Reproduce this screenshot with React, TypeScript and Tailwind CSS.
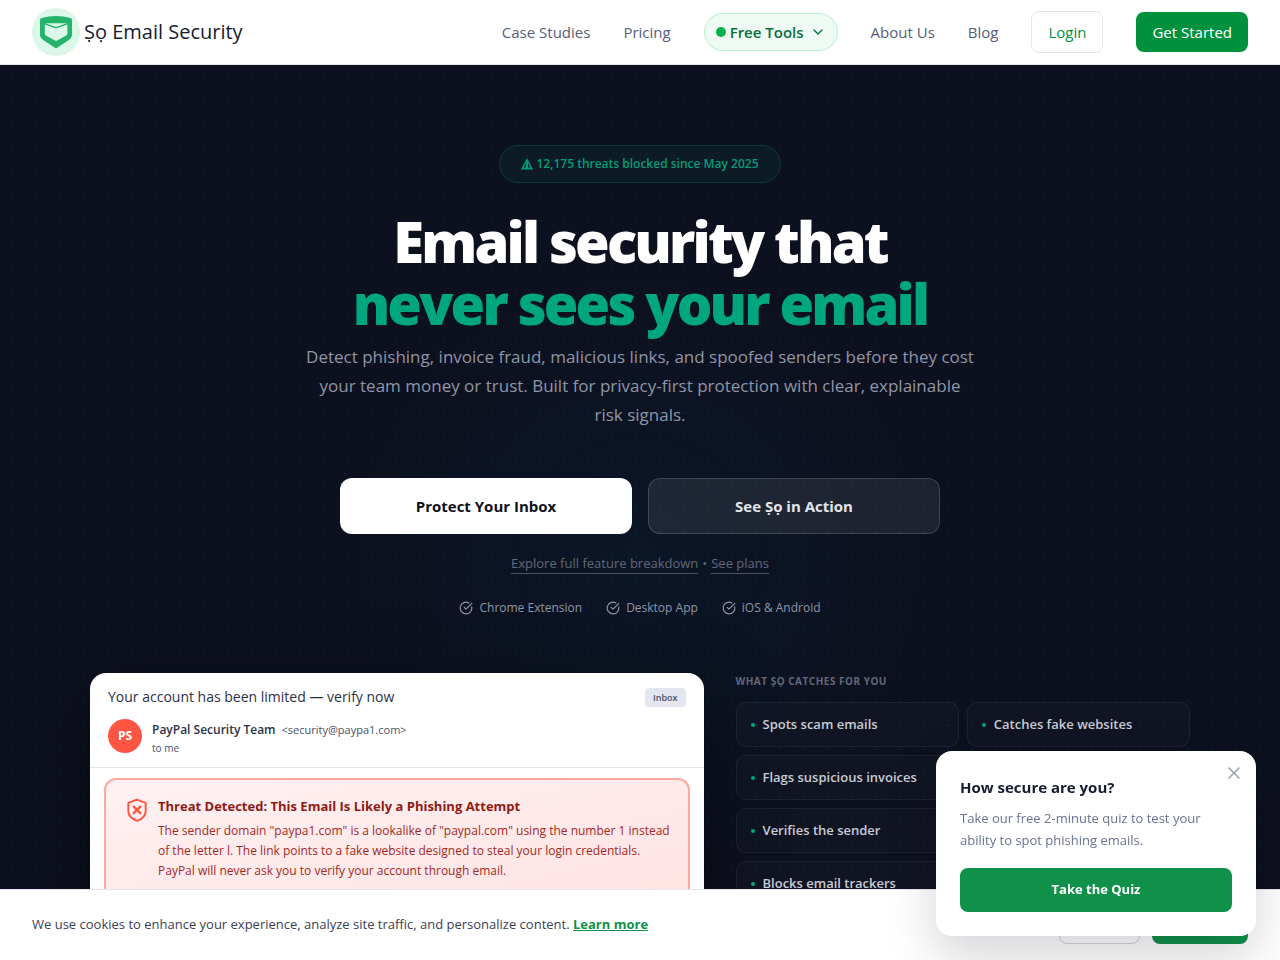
import type { ReactNode } from "react";
import { ChevronDown, CircleCheckBig, X } from "lucide-react";

const PLATFORMS = ["Chrome Extension", "Desktop App", "iOS & Android"];

const CATCH_COLUMNS = [
  ["Spots scam emails", "Flags suspicious invoices", "Verifies the sender", "Blocks email trackers"],
  ["Catches fake websites"],
];

function Logo() {
  return (
    <svg viewBox="0 0 48 48" className="h-12 w-12" aria-hidden="true">
      <circle cx="24" cy="24" r="24" fill="#dbf7e8" />
      <path
        d="M8 12.2c0-1.2.7-1.8 1.8-2.1C14.5 8.7 19 8 24 8s9.5.7 14.2 2.1c1.100.3 1.800.9 1.800 2.100V26c0 2.800-1 4.600-3.200 6l-11.300 7.500c-1 .7-2 .7-3 0L11.200 32C9 30.600 8 28.800 8 26Z"
        fill="#24b46c"
      />
      <path
        d="M12.800 16.400 24 20.600l11.400-4.200v9.200c0 .9-.3 1.400-1 1.800l-9.300 5.200c-.7.400-1.300.4-2 0l-9.300-5.200c-.6-.4-1-.9-1-1.800Z"
        fill="#dbf7e8"
      />
      <path d="M13.400 15.200h21.600L24 19Z" fill="#dbf7e8" />
    </svg>
  );
}

function WarningIcon() {
  return (
    <svg viewBox="0 0 12 12" className="h-3 w-3" aria-hidden="true">
      <path d="M6 .5 11.800 11.300H.2Z" fill="#069c78" stroke="#069c78" strokeLinejoin="round" strokeWidth=".4" />
      <path d="M5.100 4.600 2.700 9.500h2.200V5ZM6.900 4.600l2.400 4.900H7.100V5Z" fill="#0c1e28" />
    </svg>
  );
}

function ThreatIcon() {
  return (
    <svg
      viewBox="0 0 24 24"
      className="mt-0.5 h-[26px] w-[26px] flex-none"
      fill="none"
      stroke="#ff5542"
      strokeWidth="1.8"
      strokeLinecap="round"
      strokeLinejoin="round"
      aria-hidden="true"
    >
      <path d="M20 13c0 5-3.500 7.500-8 9-4.500-1.500-8-4-8-9V5.500l8-3 8 3Z" />
      <path d="m9 8.900 6 6M15 8.900l-6 6" strokeWidth="2.200" />
    </svg>
  );
}

function NavLink({ children }: { children: ReactNode }) {
  return (
    <a href="#" className="text-[15px] text-[#565d78]">
      {children}
    </a>
  );
}

function Header() {
  return (
    <header className="sticky top-0 z-10 flex h-[65px] items-center justify-between border-b border-gray-200 bg-white px-8">
      <a href="#" className="flex items-center gap-1">
        <Logo />
        <span className="text-[20px] font-medium text-[#151b30]">Ṣọ Email Security</span>
      </a>

      <nav className="flex items-center gap-[33px]">
        <NavLink>Case Studies</NavLink>
        <NavLink>Pricing</NavLink>
        <button
          type="button"
          className="flex h-[38px] items-center rounded-full border border-[#b5efcc] bg-[#f0faf5] px-[11px] text-[15px] font-semibold text-[#08703a]"
        >
          <span className="mr-1 h-[10px] w-[10px] rounded-full bg-[#00b24f]" />
          Free Tools
          <ChevronDown className="ml-1.5 h-4 w-4" />
        </button>
        <NavLink>About Us</NavLink>
        <NavLink>Blog</NavLink>
        <a
          href="#"
          className="flex h-[42px] items-center rounded-lg border border-[#e4e6f0] px-4 text-[15px] font-medium text-[#00913f]"
        >
          Login
        </a>
        <a
          href="#"
          className="flex h-10 items-center rounded-lg bg-[#00913f] px-4 text-[15px] font-medium text-white"
        >
          Get Started
        </a>
      </nav>
    </header>
  );
}

function EmailPreview() {
  return (
    <article className="overflow-hidden rounded-t-2xl bg-white shadow-[0_24px_80px_rgba(0,0,0,0.4)]">
      <div className="border-b border-[#e2e4ec] px-[18px] pt-3.5 pb-2.5">
        <div className="flex items-center justify-between">
          <h2 className="text-[14px] leading-5 text-[#2b3146]">Your account has been limited — verify now</h2>
          <span className="rounded bg-[#e3e6ee] px-2 text-[9px] leading-[19px] font-semibold text-[#4a5068]">Inbox</span>
        </div>
        <div className="mt-2 flex items-center gap-2.5">
          <div className="flex h-[34px] w-[34px] items-center justify-center rounded-full bg-[#ff5542] text-[12px] font-bold text-white">
            PS
          </div>
          <div className="pt-1.5 text-[#4a5068]">
            <div className="flex items-center gap-1.5 leading-[18px]">
              <span className="text-[12px] font-semibold text-[#2b3146]">PayPal Security Team</span>
              <span className="text-[11px]">&lt;security@paypa1.com&gt;</span>
            </div>
            <div className="text-[10px] leading-[18px]">to me</div>
          </div>
        </div>
      </div>

      <div className="px-3.5 pt-2.5">
        <div className="flex gap-2 rounded-t-xl border-2 border-b-0 border-[#ffa8a0] bg-linear-to-br from-[#fff1f2] to-[#ffe2e2] pt-[15px] pr-3 pb-8 pl-[18px]">
          <ThreatIcon />
          <div className="text-[#a3291f]">
            <h3 className="text-[13px] leading-[22px] font-bold text-[#8f1a14]">
              Threat Detected: This Email Is Likely a Phishing Attempt
            </h3>
            <p className="mt-1 text-[12px] leading-5">
              The sender domain "paypa1.com" is a lookalike of "paypal.com" using the number 1 instead of the letter l.
              The link points to a fake website designed to steal your login credentials. PayPal will never ask you to
              verify your account through email.
            </p>
          </div>
        </div>
      </div>
    </article>
  );
}

function Catches() {
  return (
    <div>
      <h2 className="text-[10px] leading-4 font-bold tracking-wider text-[#626879] uppercase">
        What Ṣọ catches for you
      </h2>
      <div className="mt-[13px] grid grid-cols-2 gap-2">
        {CATCH_COLUMNS.map((items) => (
          <ul key={items[0]} className="flex flex-col gap-2">
            {items.map((text) => (
              <li
                key={text}
                className="flex h-[45px] items-center gap-2 rounded-[10px] border border-white/6 bg-white/2 px-3.5 text-[13px] font-semibold text-[#c8ccd6]"
              >
                <span className="h-1 w-1 rounded-full bg-[#00a67e]" />
                {text}
              </li>
            ))}
          </ul>
        ))}
      </div>
    </div>
  );
}

function Hero() {
  return (
    <main className="flex flex-1 flex-col items-center bg-[#0d101e] bg-[radial-gradient(circle,rgba(0,166,126,0.1)_1px,transparent_1px),radial-gradient(circle_at_50%_55%,#0b1626_0px,#0d101e_320px)] bg-size-[24px_24px,100%_100%] px-8 pt-20">
      <div className="flex h-[38px] items-center gap-[3px] rounded-full border border-[#0b3a38] bg-[#0c1b26] px-[21px] text-[12px] font-semibold text-[#069c78]">
        <WarningIcon />
        12,175 threats blocked since May 2025
      </div>

      <h1 className="mt-[27px] text-center text-[56px] leading-[62px] font-extrabold tracking-tighter text-white">
        Email security that
        <br />
        <span className="text-[#00a67e]">never sees your email</span>
      </h1>

      <p className="mt-2 max-w-2xl text-center text-[17px] leading-[29px] text-[#9096a6]">
        Detect phishing, invoice fraud, malicious links, and spoofed senders before they cost your team money or trust.
        Built for privacy-first protection with clear, explainable risk signals.
      </p>

      <div className="mt-[49px] grid w-full max-w-[600px] grid-cols-2 gap-4 text-[15px] font-bold">
        <a href="#" className="flex h-14 items-center justify-center rounded-xl bg-white text-[#0d101e]">
          Protect Your Inbox
        </a>
        <a
          href="#"
          className="flex h-14 items-center justify-center rounded-xl border border-white/15 bg-white/8 text-[#e2e5ee]"
        >
          See Ṣọ in Action
        </a>
      </div>

      <div className="mt-5 flex gap-1 text-[13px] leading-[19px] text-[#626879]">
        <a href="#" className="border-b border-[#4a5060]">
          Explore full feature breakdown
        </a>
        <span>•</span>
        <a href="#" className="border-b border-[#4a5060]">
          See plans
        </a>
      </div>

      <ul className="mt-6 flex gap-6 text-[12px] leading-5 text-[#9096a6]">
        {PLATFORMS.map((name) => (
          <li key={name} className="flex items-center gap-1.5">
            <CircleCheckBig className="h-3.5 w-3.5" />
            {name}
          </li>
        ))}
      </ul>

      <section className="mt-[55px] grid w-full max-w-[1100px] grid-cols-[1.35fr_1fr] gap-8">
        <EmailPreview />
        <Catches />
      </section>
    </main>
  );
}

function CookieBar() {
  return (
    <div className="fixed inset-x-0 bottom-0 z-20 flex items-center justify-between border-t border-gray-200 bg-white px-8 py-4 text-[13px] text-[#3a4058]">
      <p>
        We use cookies to enhance your experience, analyze site traffic, and personalize content.{" "}
        <a href="#" className="font-bold text-[#10914a] underline">
          Learn more
        </a>
      </p>
      <div className="flex gap-3">
        <button type="button" className="h-[38px] w-[81px] rounded-lg border border-gray-300">
          Decline
        </button>
        <button type="button" className="h-[38px] w-24 rounded-lg bg-[#10914a] font-semibold text-white">
          Accept All
        </button>
      </div>
    </div>
  );
}

function QuizCard() {
  return (
    <aside className="fixed right-6 bottom-6 z-30 w-80 rounded-2xl bg-white p-6 shadow-[0_20px_50px_rgba(20,10,30,0.18)]">
      <button type="button" aria-label="Close" className="absolute top-3 right-3 text-[#9aa3b8]">
        <X className="h-5 w-5" strokeWidth={2} />
      </button>
      <h2 className="text-[15px] leading-6 font-bold text-[#151b30]">How secure are you?</h2>
      <p className="mt-2 text-[13px] leading-[22px] text-[#6b7190]">
        Take our free 2-minute quiz to test your ability to spot phishing emails.
      </p>
      <button type="button" className="mt-[17px] h-11 w-full rounded-lg bg-[#10914a] text-[13px] font-bold text-white">
        Take the Quiz
      </button>
    </aside>
  );
}

export default function App() {
  return (
    <div className="flex min-h-screen flex-col font-['Open_Sans','Noto_Sans',sans-serif]">
      <Header />
      <Hero />
      <CookieBar />
      <QuizCard />
    </div>
  );
}
